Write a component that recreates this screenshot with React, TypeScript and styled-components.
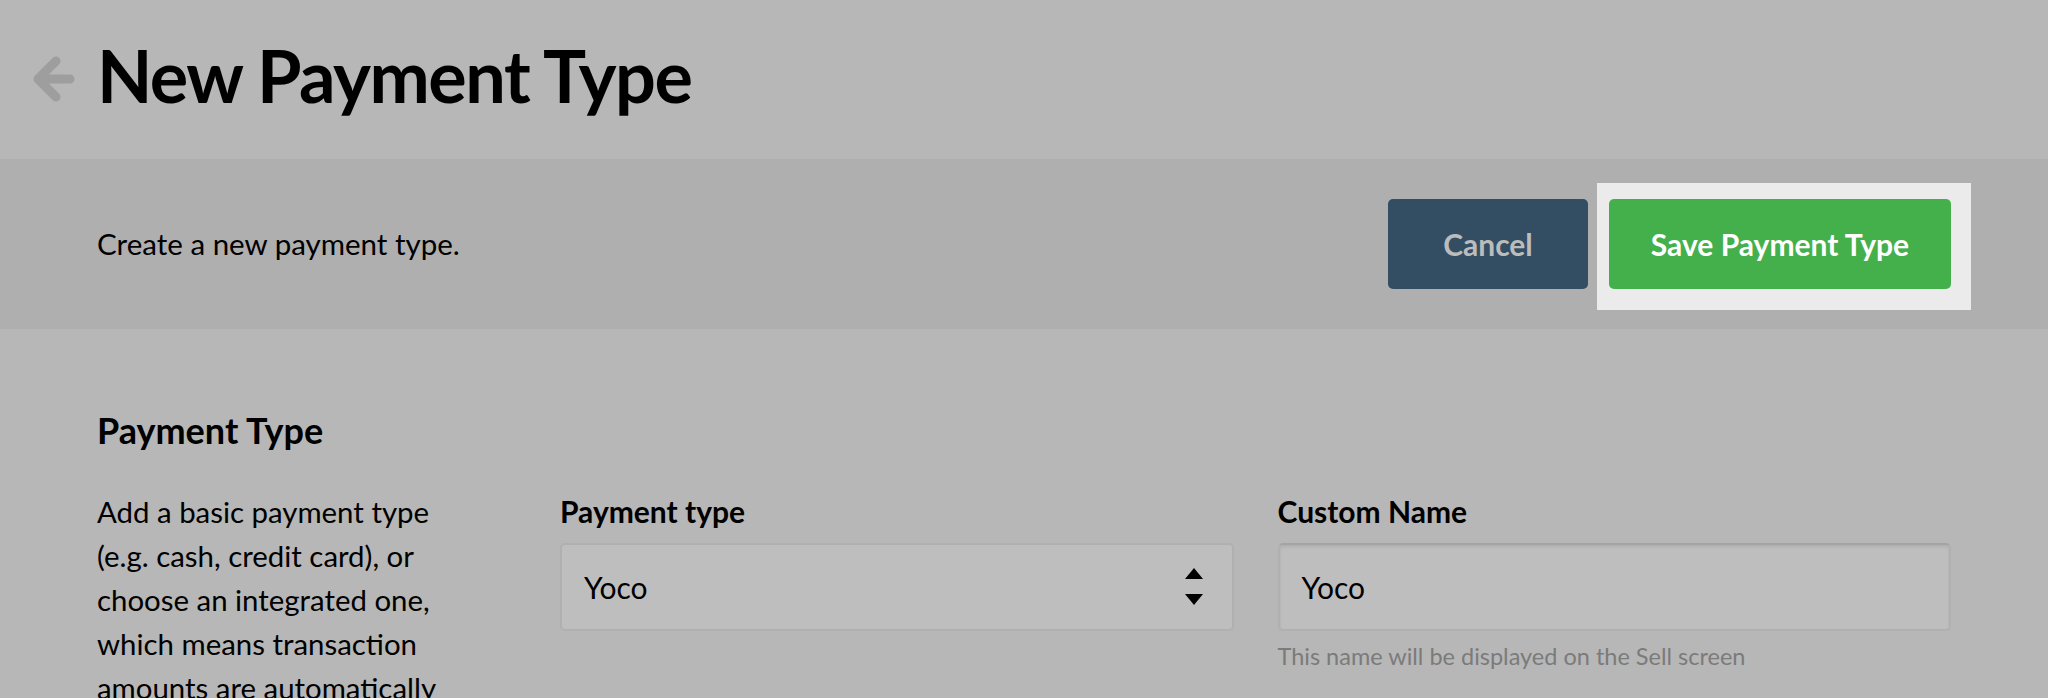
import React from "react";
import styled, { createGlobalStyle } from "styled-components";

const GlobalStyle = createGlobalStyle`
  html, body {
    margin: 0;
    padding: 0;
    background: #b7b7b7;
    font-family: "Lato", "Noto Sans", sans-serif;
    color: #000;
    overflow: hidden;
  }
`;

const Header = styled.header`
  display: flex;
  align-items: center;
  gap: 22px;
  height: 159px;
  padding: 0 97px 8px 32px;
  box-sizing: border-box;
  background: #b7b7b7;
`;

const BackLink = styled.a`
  display: flex;
  width: 43px;
  height: 46px;
  margin-top: 6px;
  color: #9e9e9e;
  cursor: pointer;
`;

const Title = styled.h1`
  margin: 0;
  font-size: 72px;
  font-weight: 700;
  line-height: 1.2;
  letter-spacing: -1.5px;
`;

const ActionBar = styled.div`
  display: flex;
  align-items: center;
  justify-content: space-between;
  height: 170px;
  padding: 0 97px;
  box-sizing: border-box;
  background: #afafaf;
`;

const Intro = styled.p`
  margin: 0;
  font-size: 29.5px;
  line-height: 1.2;
`;

const Actions = styled.div`
  display: flex;
  gap: 21px;
`;

const Spotlight = styled.div`
  position: relative;
  display: flex;

  &::before {
    content: "";
    position: absolute;
    inset: -16px -20px -21px -12px;
    background: #ebebeb;
  }
`;

const Button = styled.button<{ $variant: "cancel" | "save" }>`
  position: relative;
  height: 90px;
  padding: 0;
  width: ${(p) => (p.$variant === "save" ? "342px" : "200px")};
  border: none;
  border-radius: 5px;
  font-family: "Lato", sans-serif;
  font-size: 30px;
  font-weight: 700;
  background: ${(p) => (p.$variant === "save" ? "#43b04c" : "#334e63")};
  color: ${(p) => (p.$variant === "save" ? "#ffffff" : "#bcbcbc")};
  cursor: pointer;
`;

const Main = styled.main`
  padding: 80px 97px 0;
`;

const SectionTitle = styled.h2`
  margin: 0 0 38px;
  font-size: 36px;
  font-weight: 700;
  line-height: 1.2;
`;

const Row = styled.div`
  display: flex;
`;

const Aside = styled.p`
  width: 463px;
  flex: none;
  box-sizing: border-box;
  padding-right: 90px;
  margin: 0;
  font-size: 29.4px;
  line-height: 44px;
`;

const Fields = styled.div`
  flex: 1;
  display: grid;
  grid-template-columns: 1fr 1fr;
  gap: 44px;
`;

const Field = styled.div`
  display: flex;
  flex-direction: column;
`;

const Label = styled.label`
  padding-top: 3px;
  margin-bottom: 14px;
  font-size: 30px;
  font-weight: 700;
  line-height: 1.2;
`;

const Control = styled.div<{ $inset?: boolean }>`
  display: flex;
  align-items: center;
  justify-content: space-between;
  height: 88px;
  padding: 0 29px 0 22px;
  box-sizing: border-box;
  background: #bebebe;
  border: 2px solid #b0b0b0;
  border-top-color: ${(p) => (p.$inset ? "#a4a4a4" : "#b0b0b0")};
  border-radius: 5px;
  box-shadow: ${(p) => (p.$inset ? "inset 0 2px 3px rgba(0,0,0,0.08)" : "none")};
  font-size: 30px;
`;

const Value = styled.span`
  line-height: 1.2;
`;

const Help = styled.span`
  margin-top: 11px;
  font-size: 23.5px;
  line-height: 1.2;
  color: #7b7b7b;
`;

const Stepper = () => (
  <svg width="18" height="38" viewBox="0 0 18 38">
    <path d="M9 0 L18 11 H0 Z" fill="#000" />
    <path d="M0 26 H18 L9 37 Z" fill="#000" />
  </svg>
);

const BackArrow = () => (
  <svg width="43" height="46" viewBox="0 0 43 46" fill="none">
    <path
      d="M24 5 L6 23 L24 41 M6 23 H38"
      stroke="currentColor"
      strokeWidth="9"
      strokeLinecap="round"
      strokeLinejoin="round"
    />
  </svg>
);

export default function App() {
  return (
    <>
      <GlobalStyle />
      <Header>
        <BackLink>
          <BackArrow />
        </BackLink>
        <Title>New Payment Type</Title>
      </Header>
      <ActionBar>
        <Intro>Create a new payment type.</Intro>
        <Actions>
          <Button $variant="cancel">Cancel</Button>
          <Spotlight>
            <Button $variant="save">Save Payment Type</Button>
          </Spotlight>
        </Actions>
      </ActionBar>
      <Main>
        <SectionTitle>Payment Type</SectionTitle>
        <Row>
          <Aside>
            Add a basic payment type (e.g. cash, credit card), or choose an
            integrated one, which means transaction amounts are automatically
            sent to the payment terminal.
          </Aside>
          <Fields>
            <Field>
              <Label>Payment type</Label>
              <Control>
                <Value>Yoco</Value>
                <Stepper />
              </Control>
            </Field>
            <Field>
              <Label>Custom Name</Label>
              <Control $inset>
                <Value>Yoco</Value>
              </Control>
              <Help>This name will be displayed on the Sell screen</Help>
            </Field>
          </Fields>
        </Row>
      </Main>
    </>
  );
}
